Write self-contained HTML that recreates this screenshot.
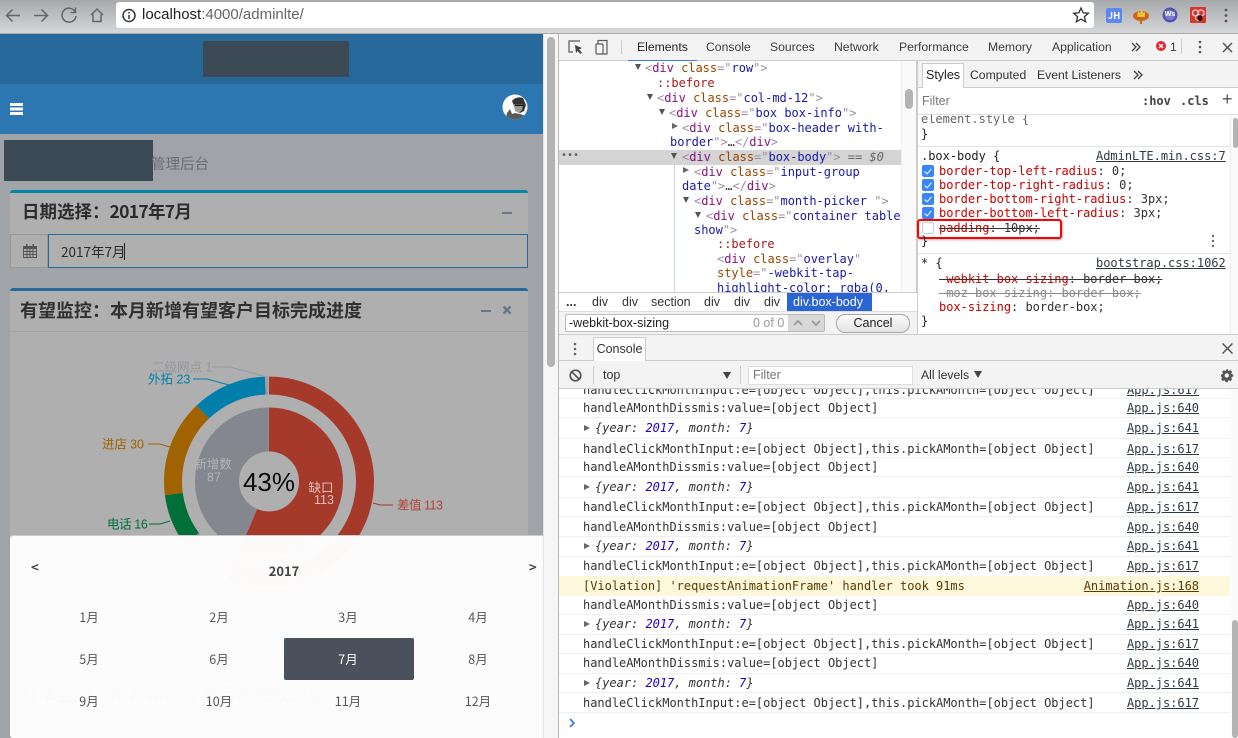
<!DOCTYPE html>
<html lang="zh"><head><meta charset="utf-8"><title>adminlte</title>
<style>
html,body{margin:0;padding:0;width:1238px;height:738px;overflow:hidden;background:#fff}
body{position:relative;font-family:"Liberation Sans","Noto Sans CJK SC",sans-serif;font-size:12.5px;color:#333}
.a{position:absolute;white-space:nowrap;line-height:16px}
.b{position:absolute}
.m{font-family:"DejaVu Sans Mono","Liberation Mono",monospace;font-size:12px;letter-spacing:-.02px}
.n{font-family:"Noto Sans CJK SC","Liberation Sans",sans-serif}
i{font-style:normal}
.t{color:#881280}.g{color:#a08ca0}.k{color:#994500}.v{color:#1a1aa6}.p{color:#a61c1c}
.r{color:#c80000}.l{color:#303942;text-decoration:underline}
.c{position:absolute;left:922px;width:12px;height:12px;background:#3b86f7;border-radius:2px}
.c:after{content:"";position:absolute;left:4px;top:1.5px;width:3px;height:6px;border:solid #fff;border-width:0 1.6px 1.6px 0;transform:rotate(40deg)}
.tab{color:#3c3c3c;font-size:12.2px}
.mo{position:absolute;width:60px;text-align:center;line-height:16px;font-size:12.5px;color:#555;font-family:"Noto Sans CJK SC",sans-serif}
.o{font-style:italic}
.d{position:absolute;width:0;height:0;border-left:3.5px solid transparent;border-right:3.5px solid transparent;border-top:6px solid #555}
.e{position:absolute;width:0;height:0;border-top:3.5px solid transparent;border-bottom:3.5px solid transparent;border-left:6px solid #666}
</style></head><body>

<!-- browser chrome -->
<div class="b" style="left:0;top:0;width:1238px;height:33px;background:linear-gradient(#a6a8ab,#d6d7d9)"></div>
<div class="b" style="left:0;top:33px;width:1238px;height:1px;background:#a9aaac"></div>
<div class="b" style="left:116px;top:2px;width:978px;height:26px;background:#fff;border-radius:3px"></div>
<svg class="b" style="left:0;top:0" width="140" height="33" fill="none" stroke="#636568" stroke-width="1.5">
<path d="M20 15.5H7M12.5 9.5 6.5 15.5l6 6"/><path d="M34 15.5H47M41.5 9.5l6 6-6 6"/>
<path d="M75 11.5A7 7 0 1 0 76 16M75.5 7.5v5h-5"/><path d="M91 15l6-6 6 6M93 14.500V21.500h8V14.500"/>
<circle cx="129" cy="15.500" r="6" stroke="#333"/><path d="M129 15v4M129 12v1.500" stroke="#333"/></svg>
<div class="a" style="left:142px;top:7px;font-size:15px;color:#202020">localhost<span style="color:#666">:4000/adminlte/</span></div>
<svg class="b" style="left:1072px;top:6px" width="18" height="18"><path d="M9 2l2.100 4.800 5.200.5-3.900 3.400 1.200 5.100L9 13.100 4.400 15.800l1.200-5.100L1.700 7.300l5.200-.5z" fill="none" stroke="#333" stroke-width="1.300"/></svg>
<div class="b n" style="left:1106px;top:8px;width:16px;height:15px;background:#5c88ee;border-radius:2px;color:#fff;font-size:9.500px;font-weight:700;text-align:center;line-height:15px">JH</div>
<svg class="b" style="left:1130px;top:4px" width="100" height="22">
<ellipse cx="11" cy="12" rx="8" ry="5" fill="#c9651f"/><path d="M11 17v3" stroke="#c9651f" stroke-width="2"/><path d="M7 13l1-6 2 2 1.500-4 2 4 1.500-1 0 5z" fill="#f2c23a"/>
<circle cx="40" cy="11" r="7.500" fill="#5355b5"/><circle cx="40" cy="11" r="5" fill="#7d7ed0"/>
<rect x="60" y="3" width="16" height="16" rx="1" fill="#d4372c"/><circle cx="65.500" cy="9" r="3" fill="none" stroke="#f4d0cc" stroke-width="1.300"/><circle cx="71" cy="9" r="3" fill="none" stroke="#f4d0cc" stroke-width="1.300"/><circle cx="68.500" cy="13.500" r="3" fill="none" stroke="#f4d0cc" stroke-width="1"/><ellipse cx="70" cy="14" rx="2.500" ry="3" fill="#2a1414"/>
<circle cx="96" cy="6" r="1.400" fill="#555"/><circle cx="96" cy="11.500" r="1.400" fill="#555"/><circle cx="96" cy="17" r="1.400" fill="#555"/></svg>
<div class="a" style="left:1164px;top:7px;width:12px;text-align:center;font-size:7px;line-height:16px;color:#fff;font-weight:700">Ws</div>

<!-- left page -->
<div class="b" style="left:0;top:34px;width:543px;height:704px;background:#a0a4a9;overflow:hidden">
 <div class="b" style="left:0;top:0;width:543px;height:50px;background:#26699a"></div>
 <div class="b" style="left:0;top:50px;width:543px;height:50px;background:#2c77b1"></div>
 <div class="b" style="left:203px;top:7px;width:146px;height:36px;background:#3b4a55"></div>
 <div class="b" style="left:10px;top:69px;width:13px;height:2.500px;background:#fff;box-shadow:0 4.500px 0 #fff,0 9px 0 #fff"></div>
 <svg class="b" style="left:502px;top:60px" width="26" height="26"><circle cx="13" cy="13" r="12.500" fill="#fff"/><clipPath id="av"><circle cx="13" cy="13" r="12.500"/></clipPath><g clip-path="url(#av)"><path d="M10 7Q14 2 21 4l3 7-2 6-4 2-4-2-2-5z" fill="#333"/><path d="M12 10h9l-1 6-3 3-4-2z" fill="#9b9b9b"/><path d="M13 10.500h8v1.500h-8z" fill="#111"/><path d="M3 27l2-8 3-4 2 5 3-1 5 1 6 2 2 6z" fill="#5a5a5a"/></g></svg>
 <div class="b" style="left:4px;top:106px;width:149px;height:41px;background:#3b4a55"></div>
 <div class="a" style="left:151px;top:120px;font-size:14.500px;line-height:22px;color:#6a6d71">管理后台</div>

 <!-- box 1 -->
 <div class="b" style="left:10px;top:156px;width:518px;height:78px;background:#afafaf;border-top:3px solid #0784a9;border-radius:3px 3px 0 0;box-sizing:border-box"></div>
 <div class="a n" style="left:22px;top:165px;font-size:17.500px;line-height:26px;font-weight:700;color:#2c2c2c">日期选择：<span style="letter-spacing:-.7px">2017年7月</span></div>
 <div class="b" style="left:502px;top:178px;width:10px;height:2px;background:#6a7787"></div>
 <div class="b" style="left:10px;top:200px;width:38px;height:34px;background:#afafaf;border:1px solid #999;box-sizing:border-box"></div>
 <svg class="b" style="left:23px;top:210px" width="14" height="14" fill="#555"><path d="M0 2h14v12H0zM1 5v8h12V5z"/><path d="M3 0h1.500v3H3zM9.500 0H11v3H9.500zM1 7h12v1H1zM1 10h12v1H1zM3.500 5h1v8h-1zM6.500 5h1v8h-1zM9.500 5h1v8h-1z"/></svg>
 <div class="b" style="left:48px;top:200px;width:480px;height:34px;background:#afafaf;border:1px solid #2a6a96;box-sizing:border-box"></div>
 <div class="a n" style="left:61px;top:208px;font-size:13.500px;line-height:19px;color:#2a2a2a">2017年7月</div>
 <div class="b" style="left:124px;top:209px;width:1px;height:17px;background:#222"></div>

 <!-- box 2 -->
 <div class="b" style="left:10px;top:254px;width:518px;height:400px;background:#afafaf;border-top:3px solid #26699a;border-radius:3px 3px 0 0;box-sizing:border-box"></div>
 <div class="b" style="left:10px;top:297px;width:518px;height:1px;background:#a4a4a4"></div>
 <div class="a n" style="left:20px;top:263px;font-size:18px;line-height:26px;font-weight:700;color:#303030">有望监控：本月新增有望客户目标完成进度</div>
 <div class="b" style="left:481px;top:276px;width:10px;height:2px;background:#6a7787"></div>
 <svg class="b" style="left:502px;top:271px" width="10" height="10"><path d="M1.500 1.500l7 7M8.500 1.500l-7 7" stroke="#6a7787" stroke-width="2.400"/></svg>

 <!-- box 3 (under modal) -->
 <div class="b" style="left:10px;top:639px;width:518px;height:70px;background:#afafaf;border-top:3px solid #08a65a;box-sizing:border-box"></div>
 <div class="a n" style="left:20px;top:647px;font-size:18px;line-height:26px;font-weight:700;color:#555">订单监控：本月新增订单目标完成进度</div>
 <div class="a n" style="left:226px;top:599px;font-size:13.500px;line-height:18px;color:#555">月目标</div>
 <div class="b" style="left:268px;top:599px;width:32px;height:20px;background:#2c6ed0;border-radius:3px"></div>
</div>

<!-- chart -->
<svg class="b" style="left:0;top:0" width="543" height="738" font-family="'Liberation Sans','Noto Sans CJK SC',sans-serif" font-size="12.500" fill="none">
 <g transform="rotate(-90 269 481.500)" stroke-width="18">
  <circle cx="269" cy="481.500" r="96" pathLength="360" stroke="#a5392a" stroke-dasharray="203.400 360"/>
  <circle cx="269" cy="481.500" r="96" pathLength="360" stroke="#8a8d95" stroke-dasharray="30.600 360" stroke-dashoffset="-203.400"/>
  <circle cx="269" cy="481.500" r="96" pathLength="360" stroke="#006f38" stroke-dasharray="28.800 360" stroke-dashoffset="-234"/>
  <circle cx="269" cy="481.500" r="96" pathLength="360" stroke="#a16200" stroke-dasharray="54 360" stroke-dashoffset="-262.800"/>
  <circle cx="269" cy="481.500" r="96" pathLength="360" stroke="#007fab" stroke-dasharray="41.400 360" stroke-dashoffset="-316.800"/>
  <circle cx="269" cy="481.500" r="96" pathLength="360" stroke="#9a9ea5" stroke-dasharray="1.800 360" stroke-dashoffset="-358.200"/>
  <circle cx="269" cy="481.500" r="52" pathLength="360" stroke="#a5392a" stroke-width="44" stroke-dasharray="203.400 360"/>
  <circle cx="269" cy="481.500" r="52" pathLength="360" stroke="#84878f" stroke-width="44" stroke-dasharray="156.600 360" stroke-dashoffset="-203.400"/>
 </g>
 <path d="M212 367h18l37 10" stroke="#989ba2"/><path d="M193 379h14l22 6" stroke="#007fab"/><path d="M148 444h12l10 3" stroke="#a16200"/><path d="M149 524h11l10-3" stroke="#006f38"/><path d="M373 503l7 2h13" stroke="#a5392a"/><path d="M178 571h12l10-6" stroke="#8a8d95"/>
 <g stroke="none">
 <text x="152" y="371.500" fill="#93969c">二级网点 1</text>
 <text x="148" y="383.500" fill="#007fab">外拓 23</text>
 <text x="102" y="448.500" fill="#a16200" letter-spacing="-.1">进店 30</text>
 <text x="107" y="528.500" fill="#006f38" letter-spacing="-.4">电话 16</text>
 <text x="134" y="575.500" fill="#8a8d95">DCC 17</text>
 <text x="397" y="509.500" fill="#b0443a" letter-spacing="-.5">差值 113</text>
 <text x="213" y="468.500" fill="#b4b4b6" text-anchor="middle">新增数</text>
 <text x="214" y="481.500" fill="#b4b4b6" text-anchor="middle">87</text>
 <text x="321" y="492" fill="#e2c4be" text-anchor="middle">缺口</text>
 <text x="324" y="504" fill="#e2c4be" text-anchor="middle">113</text>
 <text x="269" y="491" fill="#0a0a0a" font-size="26" text-anchor="middle">43%</text>
 </g>
</svg>

<!-- modal -->
<div class="b" style="left:10px;top:536px;width:533px;height:202px;background:rgba(254,254,254,.975);border-radius:3px 0 0 3px;box-shadow:0 -1px 0 #ccc"></div>
<div class="a n" style="left:31px;top:559px;font-size:13px;font-weight:700;color:#444">&lt;</div>
<div class="a n" style="left:529px;top:559px;font-size:13px;font-weight:700;color:#444">&gt;</div>
<div class="a n" style="left:254px;top:563px;width:60px;text-align:center;font-size:13px;font-weight:700;color:#444">2017</div>
<div class="b" style="left:284px;top:638px;width:130px;height:42px;background:#4a505c;border-radius:2px"></div>
<div class="mo" style="left:59px;top:609px">1月</div><div class="mo" style="left:189px;top:609px">2月</div><div class="mo" style="left:318px;top:609px">3月</div><div class="mo" style="left:448px;top:609px">4月</div>
<div class="mo" style="left:59px;top:651px">5月</div><div class="mo" style="left:189px;top:651px">6月</div><div class="mo" style="left:318px;top:651px;color:#fff">7月</div><div class="mo" style="left:448px;top:651px">8月</div>
<div class="mo" style="left:59px;top:693px">9月</div><div class="mo" style="left:189px;top:693px">10月</div><div class="mo" style="left:318px;top:693px">11月</div><div class="mo" style="left:448px;top:693px">12月</div>

<!-- page scrollbar -->
<div class="b" style="left:543px;top:34px;width:15px;height:704px;background:#f6f6f6;border-left:1px solid #e4e4e4;box-sizing:border-box"></div>
<div class="b" style="left:547px;top:37px;width:8px;height:330px;background:#b4b4b4;border-radius:4px"></div>
<div class="b" style="left:558px;top:34px;width:1px;height:704px;background:#b8b8b8"></div>

<!-- devtools toolbar -->
<div class="b" style="left:559px;top:34px;width:679px;height:26px;background:#f3f3f3;border-bottom:1px solid #ccc"></div>
<svg class="b" style="left:567px;top:39px" width="50" height="17" fill="none" stroke="#5a5a5a" stroke-width="1.200"><path d="M13 2H2v11h4"/><path d="M8 6l7 3-3 1.500 3 3-1.500 1.500-3-3L9 14z" fill="#444" stroke="none"/><rect x="29" y="5" width="7" height="10" rx="1"/><path d="M31 5V1.500h9V15h-4"/></svg>
<div class="b" style="left:621px;top:40px;width:1px;height:14px;background:#ccc"></div>
<div class="b" style="left:628px;top:60px;width:69px;height:2px;background:#3d7cf0"></div>
<div class="a tab" style="left:637px;top:39px;color:#222">Elements</div>
<div class="a tab" style="left:706px;top:39px">Console</div>
<div class="a tab" style="left:770px;top:39px">Sources</div>
<div class="a tab" style="left:834px;top:39px">Network</div>
<div class="a tab" style="left:899px;top:39px">Performance</div>
<div class="a tab" style="left:988px;top:39px">Memory</div>
<div class="a tab" style="left:1052px;top:39px">Application</div>
<svg class="b" style="left:1131px;top:42px" width="10" height="10" fill="none" stroke="#444" stroke-width="1.300"><path d="M1 1l4 4-4 4M5 1l4 4-4 4"/></svg>
<svg class="b" style="left:1155px;top:40px" width="12" height="12"><circle cx="6" cy="6" r="5" fill="#e0272e"/><path d="M4 4l4 4M8 4l-4 4" stroke="#fff" stroke-width="1.300"/></svg>
<div class="a tab" style="left:1170px;top:39px">1</div>
<div class="b" style="left:1181px;top:39px;width:1px;height:15px;background:#ccc"></div>
<svg class="b" style="left:1195px;top:38px" width="40" height="18"><circle cx="5" cy="4" r="1.300" fill="#555"/><circle cx="5" cy="9" r="1.300" fill="#555"/><circle cx="5" cy="14" r="1.300" fill="#555"/><path d="M28 5l9 9M37 5l-9 9" stroke="#555" stroke-width="1.500"/></svg>

<!-- elements tree -->
<div class="b" style="left:559px;top:61px;width:358px;height:231px;background:#fff;overflow:hidden">
 <div class="b" style="left:0;top:88.500px;width:342px;height:15px;background:#d4d4d4"></div>
 <div class="b" style="left:115px;top:103px;width:1px;height:130px;background:#c3d8f5"></div>
 <div class="b" style="left:342px;top:0;width:15px;height:231px;background:#fafafa;border-left:1px solid #eee;box-sizing:border-box"></div>
 <div class="b" style="left:346px;top:28px;width:8px;height:20px;background:#b4b4b4;border-radius:4px"></div>
 <div class="b" style="left:357px;top:0;width:1px;height:231px;background:#ccc"></div>
 <div class="a m" style="left:2px;top:87px;color:#666;font-size:10px">•••</div>
 <div class="d" style="left:76px;top:3px"></div>
 <div class="d" style="left:88px;top:33px"></div>
 <div class="d" style="left:100px;top:48px"></div>
 <div class="e" style="left:113px;top:62px"></div>
 <div class="d" style="left:112px;top:92px"></div>
 <div class="e" style="left:124px;top:106px"></div>
 <div class="d" style="left:124px;top:136px"></div>
 <div class="d" style="left:136px;top:151px"></div>
 <div class="a m" style="left:86px;top:-1px"><i class="g">&lt;</i><i class="t">div</i> <i class="k">class</i><i class="g">="</i><i class="v">row</i><i class="g">"&gt;</i></div>
 <div class="a m p" style="left:98px;top:14px">::before</div>
 <div class="a m" style="left:98px;top:29px"><i class="g">&lt;</i><i class="t">div</i> <i class="k">class</i><i class="g">="</i><i class="v">col-md-12</i><i class="g">"&gt;</i></div>
 <div class="a m" style="left:110px;top:44px"><i class="g">&lt;</i><i class="t">div</i> <i class="k">class</i><i class="g">="</i><i class="v">box box-info</i><i class="g">"&gt;</i></div>
 <div class="a m" style="left:123px;top:59px"><i class="g">&lt;</i><i class="t">div</i> <i class="k">class</i><i class="g">="</i><i class="v">box-header with-</i></div>
 <div class="a m" style="left:111px;top:73px"><i class="v">border</i><i class="g">"&gt;</i><span style="color:#333">…</span><i class="g">&lt;/</i><i class="t">div</i><i class="g">&gt;</i></div>
 <div class="a m" style="left:123px;top:88px"><i class="g">&lt;</i><i class="t">div</i> <i class="k">class</i><i class="g">="</i><i class="v">box-body</i><i class="g">"&gt;</i> <span style="color:#666">== <i style="font-style:italic">$0</i></span></div>
 <div class="a m" style="left:135px;top:103px"><i class="g">&lt;</i><i class="t">div</i> <i class="k">class</i><i class="g">="</i><i class="v">input-group</i></div>
 <div class="a m" style="left:123px;top:117px"><i class="v">date</i><i class="g">"&gt;</i><span style="color:#333">…</span><i class="g">&lt;/</i><i class="t">div</i><i class="g">&gt;</i></div>
 <div class="a m" style="left:135px;top:132px"><i class="g">&lt;</i><i class="t">div</i> <i class="k">class</i><i class="g">="</i><i class="v">month-picker </i><i class="g">"&gt;</i></div>
 <div class="a m" style="left:147px;top:147px"><i class="g">&lt;</i><i class="t">div</i> <i class="k">class</i><i class="g">="</i><i class="v">container table</i></div>
 <div class="a m" style="left:135px;top:161px"><i class="v">show</i><i class="g">"&gt;</i></div>
 <div class="a m p" style="left:158px;top:175px">::before</div>
 <div class="a m" style="left:158px;top:190px"><i class="g">&lt;</i><i class="t">div</i> <i class="k">class</i><i class="g">="</i><i class="v">overlay</i><i class="g">"</i></div>
 <div class="a m" style="left:158px;top:204px"><i class="k">style</i><i class="g">="</i><i class="v">-webkit-tap-</i></div>
 <div class="a m v" style="left:158px;top:219px">highlight-color: rgba(0,</div>
</div>

<!-- breadcrumbs + search -->
<div class="b" style="left:559px;top:292px;width:358px;height:20px;background:#fff;border-top:1px solid #ccc;box-sizing:border-box"></div>
<div class="a" style="left:566px;top:294px;font-weight:700">...</div>
<div class="a" style="left:592px;top:294px">div</div><div class="a" style="left:622px;top:294px">div</div><div class="a" style="left:651px;top:294px">section</div><div class="a" style="left:704px;top:294px">div</div><div class="a" style="left:734px;top:294px">div</div><div class="a" style="left:764px;top:294px">div</div>
<div class="b" style="left:787px;top:293px;width:85px;height:18px;background:#2a65d3"></div>
<div class="a" style="left:793px;top:294px;color:#fff">div.box-body</div>
<div class="b" style="left:559px;top:311px;width:358px;height:23px;background:#f3f3f3;border-top:1px solid #ddd;box-sizing:border-box"></div>
<div class="b" style="left:565px;top:314px;width:260px;height:18px;background:#fff;border:1px solid #bbb;border-radius:2px;box-sizing:border-box"></div>
<div class="a" style="left:569px;top:315px;font-size:12.500px;color:#222">-webkit-box-sizing</div>
<div class="a" style="left:753px;top:315px;color:#999">0 of 0</div>
<div class="b" style="left:788px;top:315px;width:36px;height:16px;background:#d8d8d8"></div>
<svg class="b" style="left:788px;top:315px" width="36" height="16" fill="none" stroke="#999" stroke-width="1.800"><path d="M6 10l4-4 4 4M24 6l4 4 4-4"/></svg>
<div class="b" style="left:836px;top:314px;width:74px;height:19px;background:linear-gradient(#fbfbfb,#e4e4e4);border:1px solid #a8a8a8;border-radius:9px;box-sizing:border-box;text-align:center;line-height:17px;color:#222">Cancel</div>

<!-- styles -->
<div class="b" style="left:917px;top:61px;width:321px;height:273px;background:#fff;overflow:hidden;border-left:1px solid #ccc;box-sizing:border-box"></div>
<div class="b" style="left:918px;top:61px;width:320px;height:26px;background:#f3f3f3;border-bottom:1px solid #ccc"></div>
<div class="b" style="left:922px;top:63px;width:42px;height:25px;background:#fff;border:1px solid #ccc;border-bottom:none;box-sizing:border-box"></div>
<div class="a" style="left:926px;top:67px;color:#222">Styles</div>
<div class="a" style="left:970px;top:67px;font-size:12.200px">Computed</div>
<div class="a" style="left:1037px;top:67px;font-size:12.200px">Event Listeners</div>
<svg class="b" style="left:1133px;top:70px" width="10" height="10" fill="none" stroke="#444" stroke-width="1.300"><path d="M1 1l4 4-4 4M5 1l4 4-4 4"/></svg>
<div class="b" style="left:918px;top:114px;width:320px;height:1px;background:#ddd"></div>
<div class="a" style="left:922px;top:93px;color:#777">Filter</div>
<div class="a m" style="left:1142px;top:93px;font-weight:700;color:#444">:hov</div>
<div class="a m" style="left:1180px;top:93px;font-weight:700;color:#444">.cls</div>
<div class="a" style="left:1222px;top:91px;font-size:18px;color:#555">+</div>
<div class="b" style="left:918px;top:115px;width:312px;height:219px;overflow:hidden">
 <div class="a m" style="left:3px;top:-4px;color:#666">element.style {</div>
 <div class="a m" style="left:3px;top:11px;color:#222">}</div>
 <div class="b" style="left:0;top:31px;width:312px;height:1px;background:#e4e4e4"></div>
 <div class="b" style="left:0;top:138px;width:312px;height:1px;background:#e4e4e4"></div>
</div>
<div class="a m" style="left:921px;top:148px;color:#222">.box-body {</div>
<div class="a m l" style="left:1096px;top:148px">AdminLTE.min.css:7</div>
<div class="c" style="top:165px"></div><div class="c" style="top:179px"></div><div class="c" style="top:193px"></div><div class="c" style="top:207px"></div>
<div class="b" style="left:922px;top:222px;width:12px;height:12px;background:#fff;border:1px solid #ccc;border-radius:2px;box-sizing:border-box"></div>
<div class="a m" style="left:939px;top:163px"><i class="r">border-top-left-radius</i>: 0;</div>
<div class="a m" style="left:939px;top:177px"><i class="r">border-top-right-radius</i>: 0;</div>
<div class="a m" style="left:939px;top:191px"><i class="r">border-bottom-right-radius</i>: 3px;</div>
<div class="a m" style="left:939px;top:205px"><i class="r">border-bottom-left-radius</i>: 3px;</div>
<div class="a m" style="left:939px;top:220px;text-decoration:line-through"><i class="r">padding</i>: 10px;</div>
<div class="b" style="left:917px;top:219px;width:145px;height:20px;border:2px solid #f00;border-radius:3px;box-sizing:border-box;box-shadow:1px 1px 2px rgba(0,0,0,.3)"></div>
<div class="a m" style="left:921px;top:233px;color:#222">}</div>
<svg class="b" style="left:1210px;top:233px" width="6" height="16"><circle cx="3" cy="3" r="1.200" fill="#666"/><circle cx="3" cy="8" r="1.200" fill="#666"/><circle cx="3" cy="13" r="1.200" fill="#666"/></svg>
<div class="a m" style="left:921px;top:255px;color:#222">* {</div>
<div class="a m l" style="left:1096px;top:255px">bootstrap.css:1062</div>
<div class="a m" style="left:939px;top:271px;text-decoration:line-through"><i class="r">-webkit-box-sizing</i>: border-box;</div>
<div class="a m" style="left:939px;top:285px;text-decoration:line-through;color:#8a8a8a">-moz-box-sizing: border-box;</div>
<div class="a m" style="left:939px;top:299px"><i class="r">box-sizing</i>: border-box;</div>
<div class="a m" style="left:921px;top:313px;color:#222">}</div>
<div class="b" style="left:1230px;top:115px;width:8px;height:219px;background:#fafafa;border-left:1px solid #eee;box-sizing:border-box"></div>
<div class="b" style="left:1233px;top:118px;width:5px;height:30px;background:#b4b4b4;border-radius:3px"></div>

<!-- console drawer -->
<div class="b" style="left:559px;top:334px;width:679px;height:27px;background:#f3f3f3;border-top:1px solid #ccc;border-bottom:1px solid #ccc;box-sizing:border-box"></div>
<svg class="b" style="left:572px;top:341px" width="6" height="16"><circle cx="3" cy="3" r="1.300" fill="#666"/><circle cx="3" cy="8" r="1.300" fill="#666"/><circle cx="3" cy="13" r="1.300" fill="#666"/></svg>
<div class="b" style="left:593px;top:337px;width:53px;height:24px;background:#fff;border:1px solid #ccc;border-bottom:none;box-sizing:border-box;text-align:center;line-height:23px;color:#333">Console</div>
<svg class="b" style="left:1222px;top:343px" width="11" height="11"><path d="M.5.500l10 10M10.500.500l-10 10" stroke="#555" stroke-width="1.500"/></svg>
<div class="b" style="left:559px;top:361px;width:679px;height:28px;background:#f3f3f3;border-bottom:1px solid #ccc;box-sizing:border-box"></div>
<svg class="b" style="left:569px;top:369px" width="13" height="13" fill="none" stroke="#555" stroke-width="1.700"><circle cx="6.500" cy="6.500" r="5.300"/><path d="M2.800 2.800l7.400 7.400"/></svg>
<div class="b" style="left:593px;top:366px;width:1px;height:18px;background:#ccc"></div>
<div class="a" style="left:603px;top:367px;color:#333">top</div>
<div class="d" style="left:723px;top:372px;border-left-width:4px;border-right-width:4px;border-top-width:7px;border-top-color:#444"></div>
<div class="b" style="left:740px;top:366px;width:1px;height:18px;background:#ccc"></div>
<div class="b" style="left:748px;top:366px;width:165px;height:19px;background:#fff;border:1px solid #ddd;box-sizing:border-box"></div>
<div class="a" style="left:753px;top:367px;color:#777">Filter</div>
<div class="a" style="left:921px;top:367px;color:#333;font-size:12.200px">All levels</div>
<div class="d" style="left:974px;top:371px;border-left-width:4px;border-right-width:4px;border-top-width:7px;border-top-color:#444"></div>
<svg class="b" style="left:1220px;top:368px" width="15" height="15"><path d="M7.500 1l1 2 2-.8 1.500 1.500-.8 2 2 1v1.800l-2 1 .8 2-1.500 1.500-2-.8-1 2H5.700l-1-2-2 .8-1.500-1.500.8-2-1-1V6.700l2-1-.8-2 1.500-1.500 2 .8 1-2z" fill="#555"/><circle cx="6.800" cy="7.500" r="2.200" fill="#f3f3f3"/></svg>

<!-- console log -->
<div class="b" style="left:559px;top:389px;width:679px;height:349px;background:#fff;overflow:hidden">
 <div class="b" style="left:0;top:0;width:671px;height:9px;border-bottom:1px solid #efefef"></div>
 <div class="b" style="left:0;top:28px;width:671px;height:1px;background:#efefef"></div>
 <div class="b" style="left:0;top:49px;width:671px;height:1px;background:#efefef"></div>
 <div class="b" style="left:0;top:68px;width:671px;height:1px;background:#efefef"></div>
 <div class="b" style="left:0;top:87px;width:671px;height:1px;background:#efefef"></div>
 <div class="b" style="left:0;top:108px;width:671px;height:1px;background:#efefef"></div>
 <div class="b" style="left:0;top:127px;width:671px;height:1px;background:#efefef"></div>
 <div class="b" style="left:0;top:147px;width:671px;height:1px;background:#efefef"></div>
 <div class="b" style="left:0;top:167px;width:671px;height:1px;background:#efefef"></div>
 <div class="b" style="left:0;top:187px;width:671px;height:20px;background:#fdf7dc"></div>
 <div class="b" style="left:0;top:225px;width:671px;height:1px;background:#efefef"></div>
 <div class="b" style="left:0;top:245px;width:671px;height:1px;background:#efefef"></div>
 <div class="b" style="left:0;top:264px;width:671px;height:1px;background:#efefef"></div>
 <div class="b" style="left:0;top:284px;width:671px;height:1px;background:#efefef"></div>
 <div class="b" style="left:0;top:303px;width:671px;height:1px;background:#efefef"></div>
 <div class="b" style="left:0;top:323px;width:671px;height:1px;background:#efefef"></div>
 <div class="b" style="left:672px;top:0;width:7px;height:349px;background:#fafafa"></div>
 <div class="b" style="left:673px;top:231px;width:6px;height:118px;background:#b4b4b4;border-radius:3px"></div>
 <div class="a m" style="left:24px;top:-7px">handleClickMonthInput:e=[object Object],this.pickAMonth=[object Object]</div><div class="a m l" style="right:39px;top:-7px">App.js:617</div>
 <div class="a m" style="left:24px;top:11px">handleAMonthDissmis:value=[object Object]</div><div class="a m l" style="right:39px;top:11px">App.js:640</div>
 <div class="e" style="left:25px;top:36px"></div><div class="a m o" style="left:36px;top:31px">{year: <b style="color:#1c00cf;font-weight:400">2017</b>, month: <b style="color:#1c00cf;font-weight:400">7</b>}</div><div class="a m l" style="right:39px;top:31px">App.js:641</div>
 <div class="a m" style="left:24px;top:52px">handleClickMonthInput:e=[object Object],this.pickAMonth=[object Object]</div><div class="a m l" style="right:39px;top:52px">App.js:617</div>
 <div class="a m" style="left:24px;top:70px">handleAMonthDissmis:value=[object Object]</div><div class="a m l" style="right:39px;top:70px">App.js:640</div>
 <div class="e" style="left:25px;top:95px"></div><div class="a m o" style="left:36px;top:90px">{year: <b style="color:#1c00cf;font-weight:400">2017</b>, month: <b style="color:#1c00cf;font-weight:400">7</b>}</div><div class="a m l" style="right:39px;top:90px">App.js:641</div>
 <div class="a m" style="left:24px;top:110px">handleClickMonthInput:e=[object Object],this.pickAMonth=[object Object]</div><div class="a m l" style="right:39px;top:110px">App.js:617</div>
 <div class="a m" style="left:24px;top:130px">handleAMonthDissmis:value=[object Object]</div><div class="a m l" style="right:39px;top:130px">App.js:640</div>
 <div class="e" style="left:25px;top:154px"></div><div class="a m o" style="left:36px;top:149px">{year: <b style="color:#1c00cf;font-weight:400">2017</b>, month: <b style="color:#1c00cf;font-weight:400">7</b>}</div><div class="a m l" style="right:39px;top:149px">App.js:641</div>
 <div class="a m" style="left:24px;top:169px">handleClickMonthInput:e=[object Object],this.pickAMonth=[object Object]</div><div class="a m l" style="right:39px;top:169px">App.js:617</div>
 <div class="a m" style="left:24px;top:189px;color:#5c3b00">[Violation] 'requestAnimationFrame' handler took 91ms</div><div class="a m l" style="right:39px;top:189px;color:#5c3b00">Animation.js:168</div>
 <div class="a m" style="left:24px;top:208px">handleAMonthDissmis:value=[object Object]</div><div class="a m l" style="right:39px;top:208px">App.js:640</div>
 <div class="e" style="left:25px;top:232px"></div><div class="a m o" style="left:36px;top:227px">{year: <b style="color:#1c00cf;font-weight:400">2017</b>, month: <b style="color:#1c00cf;font-weight:400">7</b>}</div><div class="a m l" style="right:39px;top:227px">App.js:641</div>
 <div class="a m" style="left:24px;top:247px">handleClickMonthInput:e=[object Object],this.pickAMonth=[object Object]</div><div class="a m l" style="right:39px;top:247px">App.js:617</div>
 <div class="a m" style="left:24px;top:266px">handleAMonthDissmis:value=[object Object]</div><div class="a m l" style="right:39px;top:266px">App.js:640</div>
 <div class="e" style="left:25px;top:291px"></div><div class="a m o" style="left:36px;top:286px">{year: <b style="color:#1c00cf;font-weight:400">2017</b>, month: <b style="color:#1c00cf;font-weight:400">7</b>}</div><div class="a m l" style="right:39px;top:286px">App.js:641</div>
 <div class="a m" style="left:24px;top:306px">handleClickMonthInput:e=[object Object],this.pickAMonth=[object Object]</div><div class="a m l" style="right:39px;top:306px">App.js:617</div>
 <svg class="b" style="left:9px;top:329px" width="8" height="10"><path d="M2 1l4 4-4 4" fill="none" stroke="#2d7be0" stroke-width="1.600"/></svg>
</div>
</body></html>
